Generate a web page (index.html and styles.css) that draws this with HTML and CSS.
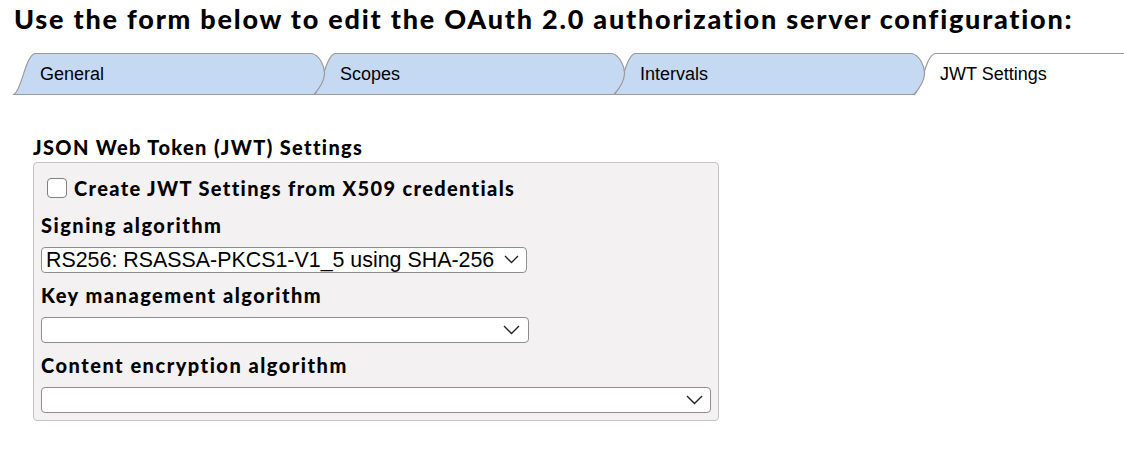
FILE: index.html
```html
<!DOCTYPE html>
<html>
<head>
    <meta charset="UTF-8">
    <title>OAuth 2.0 Authorization Server</title>
    <link rel="stylesheet" href="styles.css">
</head>
<body>
<div class="page">
    <h1 class="page-title">Use the form below to edit the OAuth 2.0 authorization server configuration:</h1>

    <!-- Tab strip -->
    <div class="tabs">
        <div class="tab">
            <svg class="tab-shape" width="320" height="44"><path d="M0,42.5 C8,38 11,4 21,1.5 L298,1.5 C305,3 311,14 310.5,22 C310,30 304,38 300,42.5 Z"/></svg>
            <span class="tab-label">General</span>
        </div>
        <div class="tab">
            <svg class="tab-shape" width="320" height="44"><path d="M0,42.5 C8,38 11,4 21,1.5 L298,1.5 C305,3 311,14 310.5,22 C310,30 304,38 300,42.5 Z"/></svg>
            <span class="tab-label">Scopes</span>
        </div>
        <div class="tab">
            <svg class="tab-shape" width="320" height="44"><path d="M0,42.5 C8,38 11,4 21,1.5 L298,1.5 C305,3 311,14 310.5,22 C310,30 304,38 300,42.5 Z"/></svg>
            <span class="tab-label">Intervals</span>
        </div>
        <div class="tab tab-active">
            <svg class="tab-shape" width="100%" height="44"><path d="M0,43 C8,38 11,4 21,1.5 L3000,1.5"/></svg>
            <span class="tab-label">JWT Settings</span>
        </div>
    </div>

    <div class="content">
        <h2 class="section-title">JSON Web Token (JWT) Settings</h2>
        <div class="settings-box">
            <label class="check-row">
                <input type="checkbox" class="check">
                <span>Create JWT Settings from X509 credentials</span>
            </label>

            <label class="field-label" for="signing">Signing algorithm</label>
            <div class="select-wrap select-signing">
                <select id="signing">
                    <option>RS256: RSASSA-PKCS1-V1_5 using SHA-256</option>
                </select>
                <svg class="chevron" width="15" height="9"><path d="M1,1 L7.5,7.5 L14,1"/></svg>
            </div>

            <label class="field-label" for="keymgmt">Key management algorithm</label>
            <div class="select-wrap select-key">
                <select id="keymgmt">
                    <option></option>
                </select>
                <svg class="chevron chevron-lg" width="17" height="10"><path d="M1,1 L8.5,8.5 L16,1"/></svg>
            </div>

            <label class="field-label" for="contentenc">Content encryption algorithm</label>
            <div class="select-wrap select-content">
                <select id="contentenc">
                    <option></option>
                </select>
                <svg class="chevron chevron-lg" width="17" height="10"><path d="M1,1 L8.5,8.5 L16,1"/></svg>
            </div>
        </div>
    </div>
</div>
</body>
</html>
```

FILE: styles.css
```css
/* Page */
body {
    margin: 0;
    background-color: #fff;
    font-family: "Liberation Sans", Arial, sans-serif;
    color: #000;
}

.page {
    padding: 0 0 0 14px;
}

/* Heading */
.page-title {
    margin: 0;
    padding-top: 3px;
    font-family: Lato, sans-serif;
    font-weight: 900;
    font-size: 27px;
    letter-spacing: 1.78px;
    line-height: 32px;
    white-space: nowrap;
}

/* Tabs */
.tabs {
    display: flex;
    margin-top: 17px;
    height: 44px;
}

.tab {
    position: relative;
    flex: 0 0 300px;
    height: 44px;
}

.tab:nth-child(1) { z-index: 4; }
.tab:nth-child(2) { z-index: 3; }
.tab:nth-child(3) { z-index: 2; }

.tab-active {
    flex: 1;
    z-index: 1;
}

.tab-shape {
    position: absolute;
    left: 0;
    top: 0;
    overflow: visible;
}

.tab-shape path {
    fill: #c6d9f2;
    stroke: #9a9a9a;
    stroke-width: 1.2;
}

.tab-active .tab-shape path {
    fill: #fff;
}

.tab-label {
    position: relative;
    display: block;
    padding-left: 26px;
    font-size: 18px;
    line-height: 44px;
}

/* Settings section */
.content {
    padding-left: 19px;
}

.section-title {
    margin: 37px 0 0;
    font-family: Lato, sans-serif;
    font-weight: 900;
    font-size: 20px;
    letter-spacing: 1.35px;
    line-height: 28px;
}

.settings-box {
    width: 670px;
    margin-top: 1px;
    padding: 13px 7px 7px 7px;
    background-color: #f3f1f2;
    border: 1px solid #c4c4c4;
    border-radius: 4px;
}

.check-row {
    display: flex;
    align-items: center;
    gap: 7px;
    height: 24px;
    margin-bottom: 11px;
    font-family: Lato, sans-serif;
    font-weight: 900;
    font-size: 20px;
    letter-spacing: 1.35px;
}

.check {
    appearance: none;
    -webkit-appearance: none;
    width: 20px;
    height: 20px;
    margin: 0 0 0 6px;
    background-color: #fff;
    border: 1px solid #808080;
    border-radius: 4px;
}

.field-label {
    display: block;
    margin: 8px 0;
    font-family: Lato, sans-serif;
    font-weight: 900;
    font-size: 20px;
    letter-spacing: 1.5px;
    line-height: 28px;
}

/* Selects */
.select-wrap {
    position: relative;
}

.select-wrap select {
    appearance: none;
    -webkit-appearance: none;
    display: block;
    box-sizing: border-box;
    height: 26px;
    margin: 0;
    padding: 0 0 0 4px;
    background-color: #fff;
    border: 1px solid #8e8e8e;
    border-radius: 4px;
    font-family: "Liberation Sans", Arial, sans-serif;
    font-size: 21.4px;
    color: #000;
}

.select-signing select { width: 486px; }
.select-key select { width: 488px; }
.select-content select { width: 670px; }

.chevron {
    position: absolute;
    top: 8px;
    pointer-events: none;
}

.chevron path {
    fill: none;
    stroke: #222;
    stroke-width: 1.4;
}

.select-signing .chevron { left: 463px; }
.select-key .chevron { left: 462px; }
.select-content .chevron { left: 645px; }
```
